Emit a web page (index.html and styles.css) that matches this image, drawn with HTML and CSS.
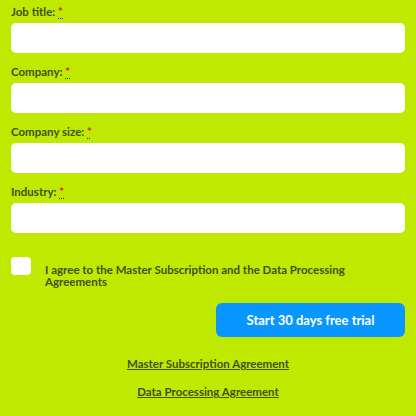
FILE: index.html
```html
<!DOCTYPE html>
<html>
<head>
<meta charset="utf-8">
<link rel="stylesheet" href="styles.css">
</head>
<body>
<form class="form">
  <div class="field">
    <label class="label">Job title: <abbr class="req" title="required">*</abbr></label>
    <input class="input" type="text">
  </div>
  <div class="field">
    <label class="label">Company: <abbr class="req" title="required">*</abbr></label>
    <input class="input" type="text">
  </div>
  <div class="field">
    <label class="label">Company size: <abbr class="req" title="required">*</abbr></label>
    <input class="input" type="text">
  </div>
  <div class="field">
    <label class="label">Industry: <abbr class="req" title="required">*</abbr></label>
    <input class="input" type="text">
  </div>
  <div class="agree">
    <span class="check"></span>
    <span class="agree-text">I agree to the Master Subscription and the Data Processing Agreements</span>
  </div>
  <div class="actions">
    <button class="btn" type="button">Start 30 days free trial</button>
  </div>
  <div class="links">
    <a class="link" href="#">Master Subscription Agreement</a>
    <a class="link" href="#">Data Processing Agreement</a>
  </div>
</form>
</body>
</html>
```
FILE: styles.css
```css
html, body {
  margin: 0;
  padding: 0;
  background: #bfe900;
}
body {
  font-family: Lato, "Open Sans", sans-serif;
  color: #434f17;
}
.form {
  padding: 5px 11px 0 11px;
  display: flex;
  flex-direction: column;
}
.field {
  display: flex;
  flex-direction: column;
  gap: 4px;
  margin-bottom: 12px;
}
.label {
  font-size: 11.5px;
  font-weight: 700;
  line-height: 14px;
}
.req {
  color: #e2261b;
  text-decoration: underline dotted #434f17;
  text-underline-offset: 2px;
}
.input {
  height: 30px;
  box-sizing: border-box;
  border: none;
  border-radius: 5px;
  background: #fff;
  margin: 0;
  padding: 0 8px;
}
.agree {
  display: flex;
  align-items: flex-start;
  gap: 14px;
  margin-top: 12px;
}
.check {
  flex: none;
  width: 20px;
  height: 18px;
  border-radius: 4px;
  background: #fff;
}
.agree-text {
  font-size: 11.5px;
  font-weight: 700;
  line-height: 12px;
  padding-top: 7px;
  padding-right: 20px;
}
.actions {
  display: flex;
  justify-content: flex-end;
  margin-top: 15px;
}
.btn {
  width: 189px;
  height: 34px;
  border: none;
  border-radius: 6px;
  background: #0a96ff;
  color: #fff;
  font-family: Lato, sans-serif;
  font-size: 13px;
  font-weight: 700;
  padding: 0;
}
.links {
  display: flex;
  flex-direction: column;
  align-items: center;
  gap: 14px;
  margin-top: 20px;
}
.link {
  font-size: 11.5px;
  font-weight: 700;
  line-height: 14px;
  color: #434f17;
  text-decoration: underline;
}
```
